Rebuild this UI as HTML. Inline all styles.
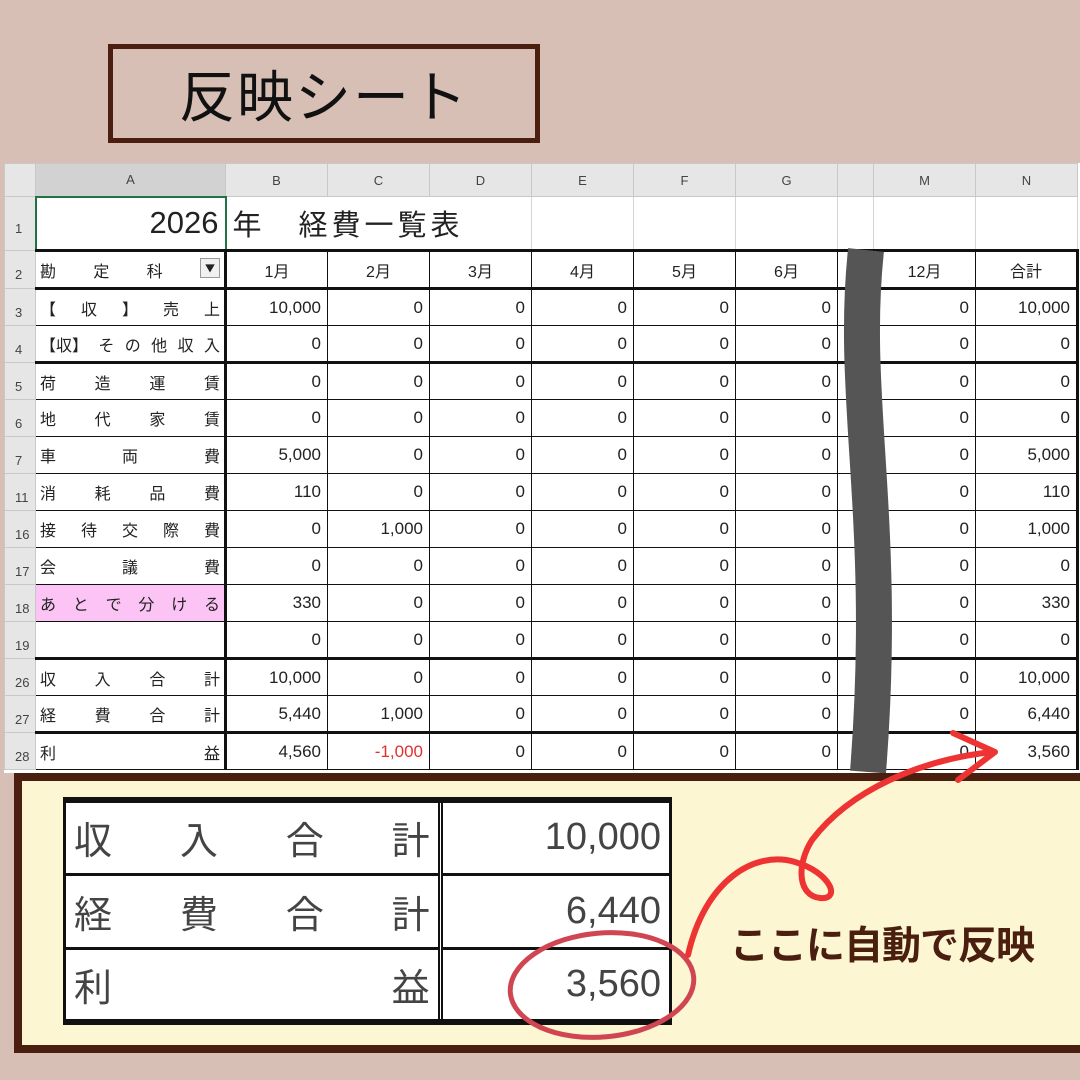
<!DOCTYPE html>
<html><head><meta charset="utf-8"><style>
*{margin:0;padding:0;box-sizing:border-box}
body{width:1080px;height:1080px;background:#d7bfb6;position:relative;overflow:hidden;font-family:"Liberation Sans","Noto Sans CJK JP",sans-serif}
.title{position:absolute;left:108px;top:44px;width:432px;height:99px;border:5px solid #4a1f10;display:flex;align-items:center;justify-content:center;font-size:56px;color:#111;font-family:"Noto Sans CJK JP",sans-serif;letter-spacing:2px}
.sheet{position:absolute;left:4px;top:163px;width:1076px;height:610px;background:#fff}
table{border-collapse:collapse;table-layout:fixed;position:absolute;left:0;top:0}
td{border:1px solid #d4d4d4;font-size:17px;color:#222;padding:0 6px;text-align:right;white-space:nowrap;overflow:hidden}
tr.h td{background:#e6e6e6;height:33px;text-align:center;font-size:13px;color:#444;border-color:#c8c8c8}
td.rn{background:#e6e6e6;text-align:left;font-size:13px;color:#444;padding:10px 0 0 10px;vertical-align:middle;border-color:#c8c8c8}
tr.d td{height:37px}
td.lab{padding:0 4px;text-align:left;font-family:"Noto Sans CJK JP",sans-serif;font-size:16px}
.dist{display:flex;justify-content:space-between}
td.m{text-align:center;font-size:16px}
.tk td.c{border-top:3px solid #111}
td.c{border:1px solid #111}
td.L{border-left:3px solid #111}
td.R{border-right:3px solid #111}
.red{color:#e03030}
.panel{position:absolute;left:14px;top:773px;width:1080px;height:280px;background:#fdf6d3;border:8px solid #4a1f10;border-right:none}
.bt{position:absolute;left:63px;top:797px;width:609px;border-collapse:collapse;background:#fff}
.bt td{border:3px solid #111;height:74px;font-size:38px;color:#444;font-family:"Noto Sans CJK JP",sans-serif;padding:0 8px}
.bt tr:first-child td{border-top:6px solid #111}
.bt tr:last-child td{border-bottom:6px solid #111}
.bt td.v{font-family:"Liberation Sans",sans-serif;font-size:38px;text-align:right;width:230px}
.bt td.l{border-right:5px double #111;width:375px}
.note{position:absolute;left:730px;top:915px;font-size:39px;font-weight:bold;color:#4a1f10;font-family:"Noto Sans CJK JP",sans-serif;letter-spacing:-1px}
</style></head><body>
<div class="title">反映シート</div>
<div class="sheet">
<table>
<colgroup><col style="width:31px"><col style="width:190px"><col style="width:102px"><col style="width:102px"><col style="width:102px"><col style="width:102px"><col style="width:102px"><col style="width:102px"><col style="width:36px"><col style="width:102px"><col style="width:102px"></colgroup>
<tr class="h"><td></td><td style="background:#d2d2d2">A</td><td>B</td><td>C</td><td>D</td><td>E</td><td>F</td><td>G</td><td></td><td>M</td><td>N</td></tr>
<tr style="height:54px"><td class="rn">1</td><td style="border:2px solid #217346;font-size:31px;padding-right:6px">2026</td><td colspan="3" style="text-align:left;font-size:29px;letter-spacing:4px;font-family:'Noto Sans CJK JP',sans-serif;border:none;padding-left:6px">年　経費一覧表</td><td></td><td></td><td></td><td></td><td></td><td></td></tr>
<tr style="height:38px"><td class="rn">2</td><td class="lab c" style="border-top:3px solid #111"><div class="dist" style="padding-right:0"><span>勘</span><span>定</span><span>科</span><span style="display:inline-block;width:20px;height:20px;border:1px solid #999;background:#f0f0f0;font-size:10px;text-align:center;line-height:18px">▼</span></div></td><td class="m c L" style="border-top:3px solid #111">1月</td><td class="m c" style="border-top:3px solid #111">2月</td><td class="m c" style="border-top:3px solid #111">3月</td><td class="m c" style="border-top:3px solid #111">4月</td><td class="m c" style="border-top:3px solid #111">5月</td><td class="m c" style="border-top:3px solid #111">6月</td><td class="c" style="border-top:3px solid #111"></td><td class="m c" style="border-top:3px solid #111">12月</td><td class="m c R" style="border-top:3px solid #111">合計</td></tr>
<tr class="d tk"><td class="rn">3</td><td class="lab c"><div class="dist"><span>【</span><span>収</span><span>】</span><span>売</span><span>上</span></div></td><td class="c L">10,000</td><td class="c">0</td><td class="c">0</td><td class="c">0</td><td class="c">0</td><td class="c">0</td><td class="c"></td><td class="c">0</td><td class="c R">10,000</td></tr>
<tr class="d"><td class="rn">4</td><td class="lab c"><div class="dist"><span>【収】</span><span>そ</span><span>の</span><span>他</span><span>収</span><span>入</span></div></td><td class="c L">0</td><td class="c">0</td><td class="c">0</td><td class="c">0</td><td class="c">0</td><td class="c">0</td><td class="c"></td><td class="c">0</td><td class="c R">0</td></tr>
<tr class="d tk"><td class="rn">5</td><td class="lab c"><div class="dist"><span>荷</span><span>造</span><span>運</span><span>賃</span></div></td><td class="c L">0</td><td class="c">0</td><td class="c">0</td><td class="c">0</td><td class="c">0</td><td class="c">0</td><td class="c"></td><td class="c">0</td><td class="c R">0</td></tr>
<tr class="d"><td class="rn">6</td><td class="lab c"><div class="dist"><span>地</span><span>代</span><span>家</span><span>賃</span></div></td><td class="c L">0</td><td class="c">0</td><td class="c">0</td><td class="c">0</td><td class="c">0</td><td class="c">0</td><td class="c"></td><td class="c">0</td><td class="c R">0</td></tr>
<tr class="d"><td class="rn">7</td><td class="lab c"><div class="dist"><span>車</span><span>両</span><span>費</span></div></td><td class="c L">5,000</td><td class="c">0</td><td class="c">0</td><td class="c">0</td><td class="c">0</td><td class="c">0</td><td class="c"></td><td class="c">0</td><td class="c R">5,000</td></tr>
<tr class="d"><td class="rn">11</td><td class="lab c"><div class="dist"><span>消</span><span>耗</span><span>品</span><span>費</span></div></td><td class="c L">110</td><td class="c">0</td><td class="c">0</td><td class="c">0</td><td class="c">0</td><td class="c">0</td><td class="c"></td><td class="c">0</td><td class="c R">110</td></tr>
<tr class="d"><td class="rn">16</td><td class="lab c"><div class="dist"><span>接</span><span>待</span><span>交</span><span>際</span><span>費</span></div></td><td class="c L">0</td><td class="c">1,000</td><td class="c">0</td><td class="c">0</td><td class="c">0</td><td class="c">0</td><td class="c"></td><td class="c">0</td><td class="c R">1,000</td></tr>
<tr class="d"><td class="rn">17</td><td class="lab c"><div class="dist"><span>会</span><span>議</span><span>費</span></div></td><td class="c L">0</td><td class="c">0</td><td class="c">0</td><td class="c">0</td><td class="c">0</td><td class="c">0</td><td class="c"></td><td class="c">0</td><td class="c R">0</td></tr>
<tr class="d"><td class="rn">18</td><td class="lab c" style="background:#fbc4f4"><div class="dist"><span>あ</span><span>と</span><span>で</span><span>分</span><span>け</span><span>る</span></div></td><td class="c L">330</td><td class="c">0</td><td class="c">0</td><td class="c">0</td><td class="c">0</td><td class="c">0</td><td class="c"></td><td class="c">0</td><td class="c R">330</td></tr>
<tr class="d"><td class="rn">19</td><td class="lab c"></td><td class="c L">0</td><td class="c">0</td><td class="c">0</td><td class="c">0</td><td class="c">0</td><td class="c">0</td><td class="c"></td><td class="c">0</td><td class="c R">0</td></tr>
<tr class="d tk"><td class="rn">26</td><td class="lab c"><div class="dist"><span>収</span><span>入</span><span>合</span><span>計</span></div></td><td class="c L">10,000</td><td class="c">0</td><td class="c">0</td><td class="c">0</td><td class="c">0</td><td class="c">0</td><td class="c"></td><td class="c">0</td><td class="c R">10,000</td></tr>
<tr class="d"><td class="rn">27</td><td class="lab c"><div class="dist"><span>経</span><span>費</span><span>合</span><span>計</span></div></td><td class="c L">5,440</td><td class="c">1,000</td><td class="c">0</td><td class="c">0</td><td class="c">0</td><td class="c">0</td><td class="c"></td><td class="c">0</td><td class="c R">6,440</td></tr>
<tr class="d tk"><td class="rn">28</td><td class="lab c"><div class="dist"><span>利</span><span>益</span></div></td><td class="c L">4,560</td><td class="c red">-1,000</td><td class="c">0</td><td class="c">0</td><td class="c">0</td><td class="c">0</td><td class="c"></td><td class="c">0</td><td class="c R">3,560</td></tr>
</table>
</div>
<svg style="position:absolute;left:0;top:0" width="1080" height="1080"><path d="M866 250 C850 400 888 520 868 772" stroke="#555" stroke-width="36" fill="none"/></svg>
<div class="panel"></div>
<table class="bt">
<tr><td class="l"><div class="dist"><span>収</span><span>入</span><span>合</span><span>計</span></div></td><td class="v">10,000</td></tr>
<tr><td class="l"><div class="dist"><span>経</span><span>費</span><span>合</span><span>計</span></div></td><td class="v">6,440</td></tr>
<tr><td class="l"><div class="dist"><span>利</span><span>益</span></div></td><td class="v">3,560</td></tr>
</table>
<div class="note">ここに自動で反映</div>
<svg style="position:absolute;left:0;top:0" width="1080" height="1080" fill="none">
<ellipse cx="602" cy="985" rx="92" ry="52" stroke="#d04552" stroke-width="5" transform="rotate(-5 602 985)"/>
<path d="M688 955 C705 880 755 850 795 862 C830 872 842 900 820 898 C798 896 796 865 812 840 C850 790 920 760 992 752" stroke="#ee3333" stroke-width="6" stroke-linecap="round"/>
<path d="M953 733 L995 752 L958 780" stroke="#ee3333" stroke-width="6" stroke-linecap="round" stroke-linejoin="round"/>
</svg>
</body></html>
